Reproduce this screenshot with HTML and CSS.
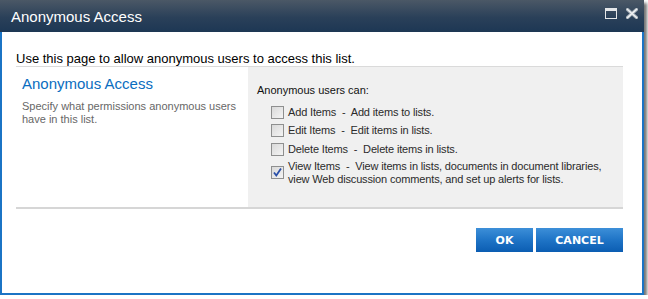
FILE: index.html
```html
<!DOCTYPE html>
<html lang="en">
<head>
  <meta charset="UTF-8" />
  <title>Anonymous Access</title>
  <link rel="stylesheet" href="styles.css">
</head>
<body>
  <div class="dialog">
    <div class="titlebar">
      <span class="title">Anonymous Access</span>
      <div class="title-icons">
        <svg class="icon" width="12" height="11" viewBox="0 0 12 11">
          <rect x="0.5" y="0.5" width="11" height="10" fill="none" stroke="#e4e6e8" stroke-width="1"/>
          <rect x="1" y="1" width="10" height="2" fill="#e4e6e8"/>
        </svg>
        <svg class="icon" width="12" height="11" viewBox="0 0 12 11">
          <path d="M1.5 1.5 L10.5 9.5 M10.5 1.5 L1.5 9.5" stroke="#9aa4ad" stroke-width="3.4" stroke-linecap="square"/>
          <path d="M1.5 1.5 L10.5 9.5 M10.5 1.5 L1.5 9.5" stroke="#eef0f2" stroke-width="1.6" stroke-linecap="square"/>
        </svg>
      </div>
    </div>

    <div class="content">
      <p class="intro">Use this page to allow anonymous users to access this list.</p>

      <div class="section">
        <div class="section-info">
          <h3>Anonymous Access</h3>
          <p>Specify what permissions anonymous users have in this list.</p>
        </div>
        <div class="section-body">
          <p class="label">Anonymous users can:</p>
          <ul class="options">
            <li><span class="check"></span><span>Add Items&nbsp; -&nbsp; Add items to lists.</span></li>
            <li><span class="check"></span><span>Edit Items&nbsp; -&nbsp; Edit items in lists.</span></li>
            <li><span class="check"></span><span>Delete Items&nbsp; -&nbsp; Delete items in lists.</span></li>
            <li class="multi">
              <span class="check checked">
                <svg width="11" height="11" viewBox="0 0 11 11"><path d="M2 5.5 L4.3 8.5 L9 1.5" fill="none" stroke="#2a4fa8" stroke-width="1.8"/></svg>
              </span>
              <span>View Items&nbsp; -&nbsp; View items in lists, documents in document libraries, view Web discussion comments, and set up alerts for lists.</span>
            </li>
          </ul>
        </div>
      </div>

      <div class="buttons">
        <button class="btn ok">OK</button>
        <button class="btn cancel">CANCEL</button>
      </div>
    </div>
  </div>
</body>
</html>
```

FILE: styles.css
```css
body {
  margin: 0;
  background: #fff;
  font-family: 'Liberation Sans', Arial, sans-serif;
}

.dialog {
  width: 640px;
  height: 293px;
  border: 2px solid #1b74c5;
  border-top: none;
  background: #fff;
  box-shadow: 3px 3px 3px rgba(0, 0, 0, 0.55);
}

.titlebar {
  height: 32px;
  margin: 0 -2px;
  padding: 0 6px 0 11px;
  display: flex;
  align-items: center;
  justify-content: space-between;
  background: linear-gradient(#4b5866, #2a4059 55%, #1d3754);
}

.title {
  color: #fff;
  font-size: 15px;
}

.title-icons {
  display: flex;
  gap: 9px;
  margin-top: -5px;
}

.content {
  margin: 0 19px 0 14px;
}

.intro {
  margin: 20px 0 0;
  font-size: 13px;
  line-height: 14px;
  color: #000;
  border-bottom: 1px solid #dadada;
}

.section {
  display: flex;
  height: 140px;
  border-bottom: 2px solid #d6d6d6;
}

.section-info {
  width: 226px;
  padding: 8px 0 0 6px;
}

.section-info h3 {
  margin: 0;
  font-size: 15px;
  font-weight: normal;
  color: #0a6dc0;
  line-height: 18px;
}

.section-info p {
  margin: 7px 0 0;
  font-size: 11px;
  line-height: 13px;
  color: #676767;
  width: 218px;
}

.section-body {
  flex: 1;
  background: #f0f0f0;
  padding: 17px 0 0 9px;
  font-size: 11px;
  color: #2b2b2b;
}

.label {
  margin: 0;
  line-height: 13px;
  color: #111;
}

.options {
  list-style: none;
  margin: 6px 0 0;
  padding: 0 0 0 14px;
  letter-spacing: -0.15px;
}

.options li {
  display: flex;
  align-items: center;
  gap: 4px;
  height: 18.5px;
  line-height: 13px;
}

.options li.multi {
  height: auto;
  margin-top: 1px;
  padding-right: 20px;
}

.check {
  flex: none;
  width: 11px;
  height: 11px;
  border: 1px solid #8e8f8f;
  background: linear-gradient(135deg, #d9d9d9, #f4f4f4);
  position: relative;
}

.check svg {
  position: absolute;
  left: 0;
  top: 0;
}

.buttons {
  display: flex;
  justify-content: flex-end;
  gap: 3px;
  padding-top: 19px;
}

.btn {
  height: 24px;
  border: none;
  padding: 0;
  color: #fff;
  font-family: 'DejaVu Sans', Verdana, sans-serif;
  font-weight: bold;
  font-size: 11px;
  background: linear-gradient(#3d8fd8, #1f74c6 50%, #0b5db2);
}

.btn.ok {
  width: 57px;
}

.btn.cancel {
  width: 87px;
}
```
